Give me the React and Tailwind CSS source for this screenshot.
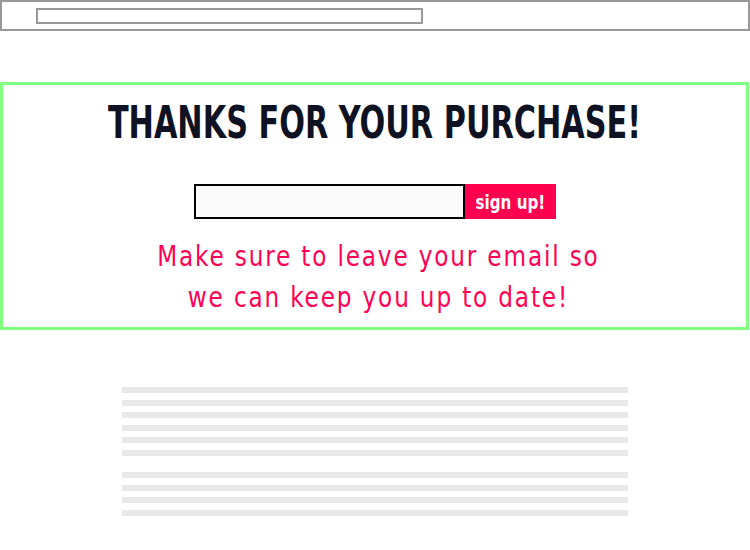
export default function App() {
  const narrow = { fontFamily: '"DejaVu Sans Condensed", "DejaVu Sans", sans-serif' };
  return (
    <div className="w-[750px] h-[550px] bg-white relative overflow-hidden" style={narrow}>
      <div className="h-[31px] border-2 border-[#999999] pl-[34px] pt-[6px]">
        <div className="w-[387px] h-[16px] border-2 border-[#999999]"></div>
      </div>
      <div className="mt-[51px] w-[749px] h-[248px] border-[3px] border-[#80ff80] flex flex-col items-center">
        <h1 className="mt-[14px] text-[44px] leading-[48px] font-bold text-[#0f1222] whitespace-nowrap scale-x-[0.765]">THANKS FOR YOUR PURCHASE!</h1>
        <div className="mt-[37px] flex">
          <div className="w-[271px] h-[35px] border-2 border-black bg-[#fafafa]"></div>
          <div className="w-[91px] h-[35px] bg-[#ff0050] text-white font-bold text-[20px] flex items-center justify-center">
            <span className="inline-block scale-x-[0.84] whitespace-nowrap">sign up!</span>
          </div>
        </div>
        <p className="mt-[17px] ml-[7px] text-[#ff0055] text-[28px] leading-[41px] text-center tracking-[2px] whitespace-nowrap scale-x-[0.92]">Make sure to leave your email so<br />we can keep you up to date!</p>
      </div>
      <div className="ml-[122px] mt-[57px] w-[506px] flex flex-col gap-[6.6px]">
        {[0,1,2,3,4,5].map(i => <div key={i} className="h-[6px] bg-[#e8e8e8]"></div>)}
        <div className="h-[2.8px]"></div>
        {[0,1,2,3].map(i => <div key={'b'+i} className="h-[6px] bg-[#e8e8e8]"></div>)}
      </div>
    </div>
  );
}
